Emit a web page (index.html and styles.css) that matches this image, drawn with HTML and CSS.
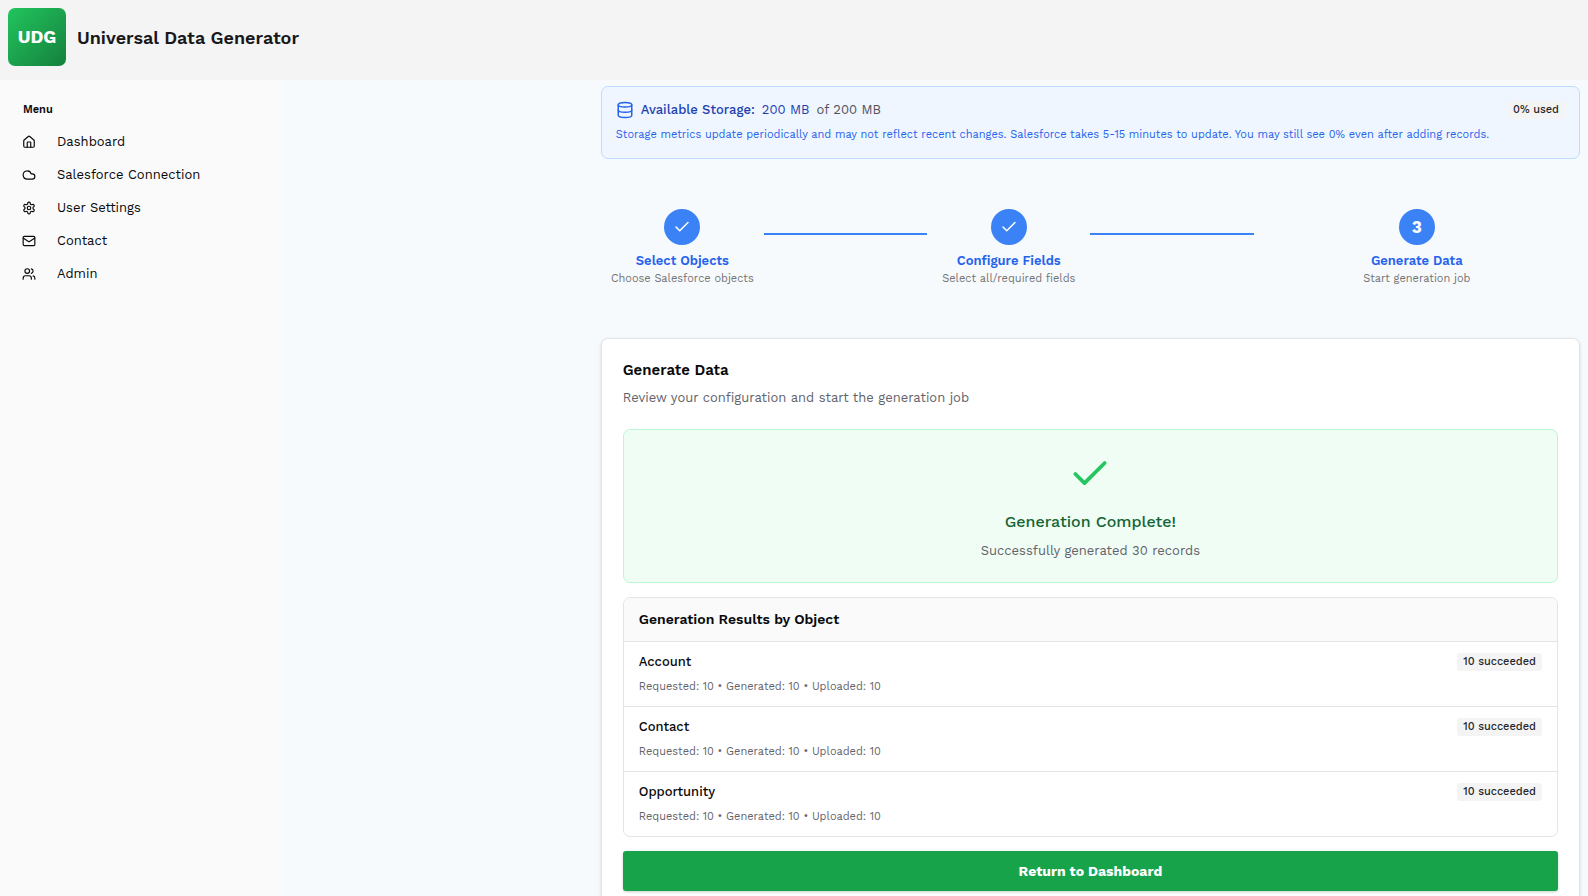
FILE: index.html
```html
<!DOCTYPE html>
<html lang="en">
<head>
<meta charset="utf-8">
<meta name="viewport" content="width=device-width, initial-scale=1">
<title>Universal Data Generator</title>
<link rel="stylesheet" href="styles.css">
</head>
<body>
<div class="app">
  <header class="header">
    <div class="logo">UDG</div>
    <h1 class="brand">Universal Data Generator</h1>
  </header>
  <div class="body">
    <nav class="sidebar" aria-label="Menu">
      <h2 class="menu-title">Menu</h2>
      <ul class="menu">
        <li><a class="menu-link" href="#"><svg class="menu-icon" viewBox="0 0 24 24"><path d="M15 21v-8a1 1 0 0 0-1-1h-4a1 1 0 0 0-1 1v8"/><path d="M3 10a2 2 0 0 1 .709-1.528l7-5.999a2 2 0 0 1 2.582 0l7 5.999A2 2 0 0 1 21 10v9a2 2 0 0 1-2 2H5a2 2 0 0 1-2-2z"/></svg>Dashboard</a></li>
        <li><a class="menu-link" href="#"><svg class="menu-icon" viewBox="0 0 24 24"><path d="M17.5 19H9a7 7 0 1 1 6.71-9h1.79a4.5 4.5 0 1 1 0 9Z"/></svg>Salesforce Connection</a></li>
        <li><a class="menu-link" href="#"><svg class="menu-icon" viewBox="0 0 24 24"><path d="M12.220 2h-.440a2 2 0 0 0-2 2v.180a2 2 0 0 1-1 1.730l-.430.250a2 2 0 0 1-2 0l-.150-.080a2 2 0 0 0-2.730.730l-.220.380a2 2 0 0 0 .730 2.730l.150.100a2 2 0 0 1 1 1.720v.510a2 2 0 0 1-1 1.740l-.150.090a2 2 0 0 0-.730 2.730l.220.380a2 2 0 0 0 2.730.730l.150-.080a2 2 0 0 1 2 0l.430.250a2 2 0 0 1 1 1.730V20a2 2 0 0 0 2 2h.440a2 2 0 0 0 2-2v-.180a2 2 0 0 1 1-1.730l.430-.250a2 2 0 0 1 2 0l.150.080a2 2 0 0 0 2.730-.730l.220-.390a2 2 0 0 0-.730-2.730l-.150-.080a2 2 0 0 1-1-1.740v-.500a2 2 0 0 1 1-1.740l.150-.090a2 2 0 0 0 .730-2.730l-.220-.380a2 2 0 0 0-2.730-.730l-.150.080a2 2 0 0 1-2 0l-.430-.250a2 2 0 0 1-1-1.730V4a2 2 0 0 0-2-2z"/><circle cx="12" cy="12" r="3"/></svg>User Settings</a></li>
        <li><a class="menu-link" href="#"><svg class="menu-icon" viewBox="0 0 24 24"><rect x="2" y="4" width="20" height="16" rx="2"/><path d="m22 7-8.991 5.727a2 2 0 0 1-2.009 0L2 7"/></svg>Contact</a></li>
        <li><a class="menu-link" href="#"><svg class="menu-icon" viewBox="0 0 24 24"><path d="M16 21v-2a4 4 0 0 0-4-4H6a4 4 0 0 0-4 4v2"/><circle cx="9" cy="7" r="4"/><path d="M22 21v-2a4 4 0 0 0-3-3.870"/><path d="M16 3.130a4 4 0 0 1 0 7.750"/></svg>Admin</a></li>
      </ul>
    </nav>
    <main class="main">
      <div class="content">
        <section class="storage">
          <div class="storage-top">
            <svg class="storage-icon" viewBox="0 0 24 24"><ellipse cx="12" cy="5" rx="9" ry="3"/><path d="M3 5v14a9 3 0 0 0 18 0V5"/><path d="M3 12a9 3 0 0 0 18 0"/></svg>
            <span class="storage-label">Available Storage:</span>
            <span class="storage-free">200 MB</span>
            <span class="storage-total">of 200 MB</span>
            <span class="badge storage-badge">0% used</span>
          </div>
          <p class="storage-note">Storage metrics update periodically and may not reflect recent changes. Salesforce takes 5-15 minutes to update. You may still see 0% even after adding records.</p>
        </section>

        <ol class="steps">
          <li class="step">
            <span class="step-dot"><svg class="step-check" viewBox="0 0 24 24"><path d="M20 6 9 17l-5-5"/></svg></span>
            <span class="step-name">Select Objects</span>
            <span class="step-hint">Choose Salesforce objects</span>
          </li>
          <li class="step-line" aria-hidden="true"></li>
          <li class="step">
            <span class="step-dot"><svg class="step-check" viewBox="0 0 24 24"><path d="M20 6 9 17l-5-5"/></svg></span>
            <span class="step-name">Configure Fields</span>
            <span class="step-hint">Select all/required fields</span>
          </li>
          <li class="step-line" aria-hidden="true"></li>
          <li class="step step-last">
            <span class="step-dot">3</span>
            <span class="step-name">Generate Data</span>
            <span class="step-hint">Start generation job</span>
          </li>
        </ol>

        <section class="card">
          <h2 class="card-title">Generate Data</h2>
          <p class="card-text">Review your configuration and start the generation job</p>
          <div class="success">
            <svg class="success-icon" viewBox="0 0 24 24"><path d="M20 6 9 17l-5-5"/></svg>
            <h3 class="success-title">Generation Complete!</h3>
            <p class="success-text">Successfully generated 30 records</p>
          </div>
          <div class="results">
            <h3 class="results-title">Generation Results by Object</h3>
            <div class="result">
              <div class="result-top"><span class="result-name">Account</span><span class="badge">10 succeeded</span></div>
              <p class="result-text">Requested: 10 • Generated: 10 • Uploaded: 10</p>
            </div>
            <div class="result">
              <div class="result-top"><span class="result-name">Contact</span><span class="badge">10 succeeded</span></div>
              <p class="result-text">Requested: 10 • Generated: 10 • Uploaded: 10</p>
            </div>
            <div class="result">
              <div class="result-top"><span class="result-name">Opportunity</span><span class="badge">10 succeeded</span></div>
              <p class="result-text">Requested: 10 • Generated: 10 • Uploaded: 10</p>
            </div>
          </div>
          <button class="return" type="button">Return to Dashboard</button>
        </section>
      </div>
    </main>
  </div>
</div>
</body>
</html>
```
FILE: styles.css
```css
* { box-sizing: border-box; margin: 0; padding: 0; }
body {
  font-family: "Work Sans", Inter, "Noto Sans", sans-serif;
  font-size: 13px;
  line-height: 18px;
  color: #09090b;
}
ul, ol { list-style: none; }
svg { fill: none; stroke: currentColor; stroke-width: 2; stroke-linecap: round; stroke-linejoin: round; flex: none; }

.app { display: flex; flex-direction: column; height: 100vh; }
.header { display: flex; align-items: flex-start; gap: 11px; height: 80px; padding: 8px; background: #f4f4f4; flex: none; }
.logo {
  display: grid; place-items: center; width: 58px; height: 58px; border-radius: 7px;
  background: linear-gradient(135deg, #22c55e, #15803d);
  color: #fff; font-size: 18px; line-height: 24px; font-weight: 700;
}
.brand { font-size: 18px; line-height: 60px; font-weight: 600; color: #18181b; }

.body { display: flex; flex: 1; min-height: 0; }
.sidebar { width: 283px; flex: none; padding: 21px 8px; background: #fafafa; }
.menu-title { padding: 0 15px; font-size: 11px; font-weight: 600; }
.menu { padding-top: 6px; }
.menu-link { display: flex; align-items: center; gap: 21px; height: 33px; padding: 0 14px; color: inherit; text-decoration: none; }
.menu-icon { width: 14px; height: 14px; }

.main { flex: 1; min-width: 0; padding: 6px 8px 22px 0; overflow-y: auto; scrollbar-width: none; background: #f7fafd; }
.content { width: 75.5%; margin-left: auto; }

.badge { padding: 0 6px; border-radius: 3px; background: #f4f4f5; color: #27272a; font-size: 11px; font-weight: 500; }

.storage { height: 73px; padding: 14px; border: 1px solid #bfdbfe; border-radius: 7px; background: #eff6ff; }
.storage-top { display: flex; align-items: center; gap: 7px; }
.storage-icon { width: 18px; height: 18px; color: #2563eb; }
.storage-label { color: #1e40af; font-weight: 500; }
.storage-free { color: #1e40af; }
.storage-total { color: #52525b; }
.storage-badge { margin-left: auto; }
.storage-note { padding-top: 7px; font-size: 11px; color: #2563eb; }

.steps { display: grid; grid-template-columns: repeat(6, 1fr); padding: 50px 0; }
.step { display: flex; flex-direction: column; align-items: center; text-align: center; white-space: nowrap; }
.step-last { grid-column: span 2; }
.step-dot { display: grid; place-items: center; width: 36px; height: 36px; margin-bottom: 7px; border-radius: 50%; background: #3b82f6; color: #fff; font-size: 17px; font-weight: 700; }
.step-check { width: 18px; height: 18px; }
.step-name { color: #2563eb; font-weight: 600; }
.step-hint { color: #737373; font-size: 11px; }
.step-line { height: 2px; margin-top: 24px; background: #3b82f6; }

.card { padding: 21px; border: 1px solid #e4e4e7; border-radius: 7px; background: #fff; box-shadow: 0 1px 3px rgba(0, 0, 0, .15); }
.card-title { font-size: 15px; line-height: 20px; font-weight: 600; }
.card-text { padding: 9px 0 22px; color: #63636b; }

.success { display: flex; flex-direction: column; align-items: center; padding: 22px; border: 1px solid #bbf7d0; border-radius: 7px; background: #f0fdf4; }
.success-icon { width: 44px; height: 44px; color: #22c55e; }
.success-title { padding-top: 15px; font-size: 16px; line-height: 22px; font-weight: 500; color: #166534; }
.success-text { padding-top: 9px; color: #63636b; }

.results { margin: 14px 0; border: 1px solid #e4e4e7; border-radius: 7px; overflow: hidden; }
.results-title { padding: 11px 15px; background: #fafafa; font-size: 14px; line-height: 21px; font-weight: 600; }
.result { padding: 11px 15px 10px; border-top: 1px solid #e4e4e7; }
.result-top { display: flex; align-items: center; justify-content: space-between; }
.result-name { font-weight: 500; }
.result-text { padding-top: 7px; font-size: 11px; color: #63636b; }

.return { display: block; width: 100%; height: 40px; border: 0; border-radius: 3px; background: #16a34a; color: #fff; font: inherit; font-size: 14px; font-weight: 700; box-shadow: 0 1px 3px rgba(0, 0, 0, .2); }
```
